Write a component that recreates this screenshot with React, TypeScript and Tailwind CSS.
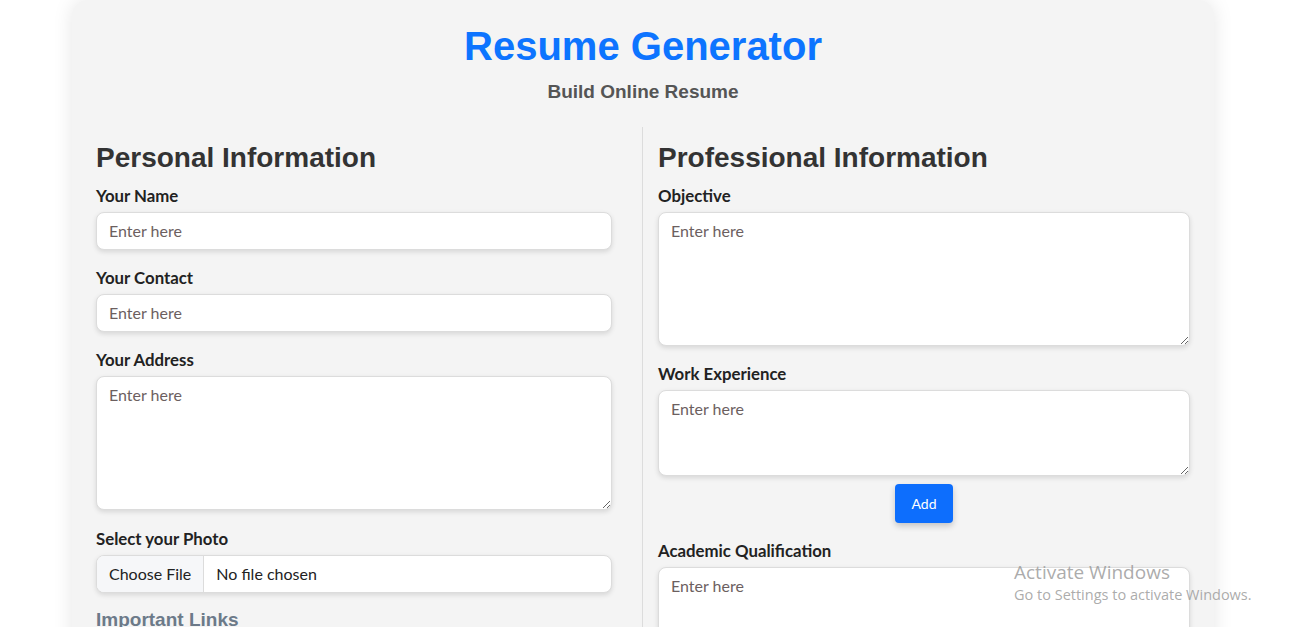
import React from 'react';

const label = 'block text-[16.8px] leading-6 font-bold text-[#222] pt-[1px] mb-[4px] font-["Lato",sans-serif]';
const field =
  'block w-full bg-white border border-[#dcdcdc] rounded-[8px] shadow-[0_2px_5px_rgba(0,0,0,0.12)] px-3 text-[16px] text-[#333] font-["Lato",sans-serif] placeholder:text-[#6c5f5f] outline-none';

function Input({title}: {title: string}) {
  return (
    <div className="mb-[15px]">
      <label className={label}>{title}</label>
      <input className={field + ' h-[38px] pb-[2px]'} placeholder="Enter here" />
    </div>
  );
}

function Area({title, h, mb = 'mb-[15px]'}: {title: string; h: string; mb?: string}) {
  return (
    <div className={mb}>
      <label className={label}>{title}</label>
      <textarea className={field + ' pt-[6px] pb-[8px] resize-y ' + h} placeholder="Enter here" />
    </div>
  );
}

export default function App() {
  return (
    <div className="min-h-screen bg-white overflow-hidden relative">
      <div className="w-[1142px] ml-[72px] bg-[#f4f4f4] rounded-[16px] shadow-[0_0_20px_rgba(0,0,0,0.1)] px-6 pt-[22px] pb-10 font-['Liberation_Sans',Arial,sans-serif]">
        {/* Header */}
        <h1 className="text-center text-[40px] leading-[48px] font-bold text-[#0d74ff]">Resume Generator</h1>
        <p className="text-center text-[19px] leading-6 font-bold text-[#555] mt-[10px] mb-[-1px]">Build Online Resume</p>

        <div className="flex mt-6">
          {/* Personal */}
          <section className="w-[546px] shrink-0 pr-[30px] pt-[14px]">
            <h2 className="text-[28px] leading-[34px] font-bold text-[#333] mb-2">Personal Information</h2>
            <Input title="Your Name" />
            <Input title="Your Contact" />
            <Area title="Your Address" h="h-[134px]" mb="mb-[16px]" />
            <div className="mb-[15px]">
              <label className={label}>Select your Photo</label>
              <div className="flex h-[38px] bg-white border border-[#dcdcdc] rounded-[8px] shadow-[0_2px_5px_rgba(0,0,0,0.12)] overflow-hidden text-[16px] text-[#222] font-['Lato',sans-serif]">
                <span className="flex items-center px-3 bg-[#f6f7f9] border-r border-[#dcdcdc]">Choose File</span>
                <span className="flex items-center px-3">No file chosen</span>
              </div>
            </div>
            <h3 className="text-[19px] leading-6 font-bold text-[#6c7a89] mt-[14px]">Important Links</h3>
          </section>

          {/* Professional */}
          <section className="flex-1 border-l border-[#dcdcdc] pl-[15px] pt-[14px]">
            <h2 className="text-[28px] leading-[34px] font-bold text-[#333] mb-2">Professional Information</h2>
            <Area title="Objective" h="h-[134px]" />
            <div>
              <label className={label}>Work Experience</label>
              <textarea className={field + ' pt-[6px] pb-[8px] resize-y h-[86px]'} placeholder="Enter here" />
            </div>
            <div className="flex justify-center mt-2 mb-[15px]">
              <button className="h-[39px] px-[16px] bg-[#0d6efd] text-white text-[14px] rounded-[4px] shadow-[0_3px_6px_rgba(0,0,0,0.2)] font-['Lato',sans-serif]">
                Add
              </button>
            </div>
            <Area title="Academic Qualification" h="h-[134px]" />
          </section>
        </div>
      </div>

      {/* Windows watermark */}
      <div className="absolute left-[1014px] top-[561px] text-[rgba(150,150,150,0.8)] font-['Open_Sans',sans-serif] pointer-events-none">
        <div className="text-[19px] leading-[22px]">Activate Windows</div>
        <div className="text-[14.5px] leading-[20px] mt-[2px]">Go to Settings to activate Windows.</div>
      </div>
    </div>
  );
}
